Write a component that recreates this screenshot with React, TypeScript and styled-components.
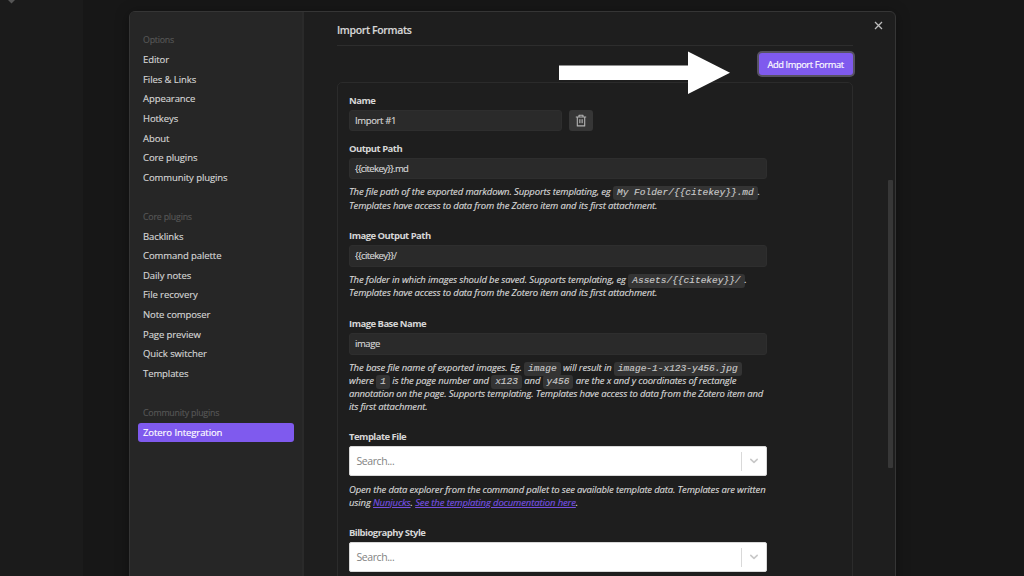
import React from 'react';
import styled, { createGlobalStyle } from 'styled-components';

const Global = createGlobalStyle`
  * { box-sizing: border-box; }
  html, body { margin: 0; height: 100%; overflow: hidden; background: #171717; }
  body { font-family: "Open Sans", "Noto Sans", sans-serif; font-size: 9.5px; color: #d6d6d6; -webkit-text-stroke: 0.15px; }
`;

const Screen = styled.div`
  position: relative;
  display: flex;
  width: 1024px;
  height: 576px;
  overflow: hidden;
  background: #171717;
`;

const Backdrop = styled.div`
  flex: 0 0 83px;
  background: #1b1b1b;
`;

const Diamond = styled.svg`
  display: block;
  margin-left: 8px;
`;

const Modal = styled.div`
  display: flex;
  flex: 0 0 767px;
  height: 600px;
  margin: 11px 0 0 45.5px;
  border: 1.5px solid #353535;
  border-radius: 6px;
  background: #1e1e1e;
  box-shadow: 0 2px 14px rgba(0, 0, 0, 0.35);
  overflow: hidden;
`;

const Sidebar = styled.nav`
  flex: 0 0 174px;
  padding: 18.2px 8px 0;
  background: #262626;
  border-right: 2px solid #2a2a2a;
`;

const NavGroup = styled.div`
  margin-bottom: 19px;
`;

const NavTitle = styled.div`
  height: 20px;
  padding-left: 5.5px;
  line-height: 20px;
  font-size: 8.8px;
  color: #565656;
  white-space: nowrap;
  letter-spacing: -0.2px;
`;

const NavItem = styled.div<{ $active?: boolean }>`
  height: 19.64px;
  padding-left: 5.5px;
  line-height: 19.64px;
  border-radius: 3px;
  white-space: nowrap;
  letter-spacing: -0.08px;
  color: ${(p) => (p.$active ? '#ffffff' : '#d4d4d4')};
  background: ${(p) => (p.$active ? '#7f5aee' : 'transparent')};
`;

const Main = styled.main`
  position: relative;
  flex: 1;
  padding: 8px 42px 0 33px;
`;

const Heading = styled.h1`
  height: 25.5px;
  margin: 0;
  border-bottom: 1px solid #2d2d2d;
  font-size: 10.5px;
  font-weight: 600;
  line-height: 20px;
  letter-spacing: -0.36px;
  text-indent: 0.5px;
`;

const Toolbar = styled.div`
  display: flex;
  justify-content: flex-end;
  padding: 7px 0 7px;
`;

const AddButton = styled.button`
  width: 94px;
  height: 22px;
  padding: 2px 0 0;
  border: 0;
  border-radius: 3px;
  background: #7f5aee;
  box-shadow: 0 0 0 2px #575262;
  color: #fff;
  font: 9.3px "Open Sans", sans-serif;
  white-space: nowrap;
  letter-spacing: -0.4px;
`;

const Card = styled.section`
  height: 530px;
  padding: 9px 11px 0;
  border: 1px solid #2b2b2b;
  border-radius: 5px;
`;

const Field = styled.div<{ $h: number }>`
  height: ${(p) => p.$h}px;
  width: 418px;
`;

const Label = styled.div`
  height: 18px;
  line-height: 18px;
  font-size: 9.5px;
  font-weight: 700;
  letter-spacing: -0.52px;
  text-indent: 0.5px;
  -webkit-text-stroke: 0;
`;

const InputRow = styled.div`
  display: flex;
  gap: 7px;
`;

const TextInput = styled.div<{ $w?: number; $ls?: number }>`
  width: ${(p) => p.$w ?? 418}px;
  height: 21.5px;
  padding-left: 5.5px;
  border: 1px solid #2e2e2e;
  border-radius: 3px;
  background: #2a2a2a;
  line-height: 20px;
  font-size: 9.5px;
  letter-spacing: ${(p) => p.$ls ?? -0.43}px;
  white-space: nowrap;
`;

const IconButton = styled.div`
  display: grid;
  place-items: center;
  width: 24.5px;
  height: 21px;
  border-radius: 3px;
  background: #363636;
`;

const Description = styled.div<{ $top?: number }>`
  padding: ${(p) => p.$top ?? 6}px 0 0 0.5px;
  font-style: italic;
`;

const Line = styled.div<{ $h?: number; $ls?: number }>`
  height: ${(p) => p.$h ?? 13}px;
  line-height: ${(p) => p.$h ?? 13}px;
  letter-spacing: ${(p) => p.$ls ?? -0.155}px;
  white-space: nowrap;
`;

const Code = styled.code`
  padding: 1px 4px 2px;
  border-radius: 3px;
  background: #343434;
  color: #c8c8c8;
  font: italic 9.5px "Liberation Mono", monospace;
  letter-spacing: 0;
  line-height: 10px;
`;

const Anchor = styled.a`
  color: #7650e0;
  text-decoration: underline;
`;

const SelectBox = styled.div`
  display: flex;
  align-items: center;
  height: 30px;
  padding-left: 7px;
  border: 1px solid #d8d8d8;
  border-radius: 2px;
  background: #fff;
  color: #828282;
  font-size: 10.5px;
  letter-spacing: -0.42px;
  -webkit-text-stroke: 0;
`;

const Placeholder = styled.span`
  flex: 1;
`;

const Indicator = styled.span`
  display: grid;
  place-items: center;
  width: 25px;
  height: 19px;
  border-left: 1px solid #d9d9d9;
`;

const CloseIcon = styled.svg`
  position: absolute;
  top: 9px;
  right: 12px;
`;

const Scrollbar = styled.div`
  position: absolute;
  top: 168px;
  right: 2px;
  width: 5px;
  height: 288px;
  border-radius: 1px;
  background: #373737;
`;

const Arrow = styled.svg`
  position: absolute;
  left: 559px;
  top: 51px;
`;

const Search = () => (
  <SelectBox>
    <Placeholder>Search...</Placeholder>
    <Indicator>
      <svg width="10" height="6" viewBox="0 0 10 6" fill="none" stroke="#c8c8c8" strokeWidth="1.6" strokeLinecap="round" strokeLinejoin="round">
        <path d="M1.8 1.4 5 4.4 8.2 1.4" />
      </svg>
    </Indicator>
  </SelectBox>
);

const groups: { title: string; items: string[] }[] = [
  {
    title: 'Options',
    items: ['Editor', 'Files & Links', 'Appearance', 'Hotkeys', 'About', 'Core plugins', 'Community plugins'],
  },
  {
    title: 'Core plugins',
    items: [
      'Backlinks', 'Command palette', 'Daily notes', 'File recovery',
      'Note composer', 'Page preview', 'Quick switcher', 'Templates',
    ],
  },
  { title: 'Community plugins', items: ['Zotero Integration'] },
];

export default function App() {
  return (
    <Screen>
      <Global />
      <Backdrop>
        <Diamond width="7" height="4" viewBox="0 0 7 4"><path d="M0 0h7L3.5 3.5z" fill="#555" /></Diamond>
      </Backdrop>
      <Modal>
        <Sidebar>
          {groups.map((g) => (
            <NavGroup key={g.title}>
              <NavTitle>{g.title}</NavTitle>
              {g.items.map((name) => (
                <NavItem key={name} $active={name === 'Zotero Integration'}>{name}</NavItem>
              ))}
            </NavGroup>
          ))}
        </Sidebar>
        <Main>
          <Heading>Import Formats</Heading>
          <Toolbar><AddButton>Add Import Format</AddButton></Toolbar>
          <Card>
            <Field $h={48}>
              <Label>Name</Label>
              <InputRow>
                <TextInput $w={213} $ls={-0.35}>Import #1</TextInput>
                <IconButton>
                  <svg width="12" height="13" viewBox="0 0 12 13" fill="none" stroke="#b4b4b4" strokeWidth="1.1" strokeLinejoin="round">
                    <path d="M.8 3h10.4M4 3V1.3h4V3M2.3 3v8.9h7.4V3" />
                    <path d="M4.6 5.2v4M6 5.2v4M7.4 5.2v4" strokeWidth=".8" />
                  </svg>
                </IconButton>
              </InputRow>
            </Field>
            <Field $h={87.5}>
              <Label>Output Path</Label>
              <TextInput $ls={-0.63}>{'{{citekey}}.md'}</TextInput>
              <Description>
                <Line $h={13.5} $ls={-0.14}>The file path of the exported markdown. Supports templating, eg <Code>{'My Folder/{{citekey}}.md'}</Code>.</Line>
                <Line>Templates have access to data from the Zotero item and its first attachment.</Line>
              </Description>
            </Field>
            <Field $h={88}>
              <Label>Image Output Path</Label>
              <TextInput $ls={-0.6}>{'{{citekey}}/'}</TextInput>
              <Description>
                <Line $h={13.5} $ls={-0.14}>The folder in which images should be saved. Supports templating, eg <Code>{'Assets/{{citekey}}/'}</Code>.</Line>
                <Line>Templates have access to data from the Zotero item and its first attachment.</Line>
              </Description>
            </Field>
            <Field $h={113}>
              <Label>Image Base Name</Label>
              <TextInput>image</TextInput>
              <Description>
                <Line $ls={-0.13}>The base file name of exported images. Eg. <Code>image</Code> will result in <Code>image-1-x123-y456.jpg</Code></Line>
                <Line $ls={-0.14}>where <Code>1</Code> is the page number and <Code>x123</Code> and <Code>y456</Code> are the x and y coordinates of rectangle</Line>
                <Line>annotation on the page. Supports templating. Templates have access to data from the Zotero item and</Line>
                <Line>its first attachment.</Line>
              </Description>
            </Field>
            <Field $h={96}>
              <Label>Template File</Label>
              <Search />
              <Description $top={7}>
                <Line>Open the data explorer from the command pallet to see available template data. Templates are written</Line>
                <Line $ls={-0.13}>using <Anchor>Nunjucks</Anchor>. <Anchor>See the templating documentation here</Anchor>.</Line>
              </Description>
            </Field>
            <Field $h={60}>
              <Label>Bilbiography Style</Label>
              <Search />
            </Field>
          </Card>
          <CloseIcon width="9" height="9" viewBox="0 0 9 9" stroke="#bdbdbd" strokeWidth="1.3">
            <path d="M1 1l7 7M8 1L1 8" />
          </CloseIcon>
          <Scrollbar />
        </Main>
      </Modal>
      <Arrow width="172" height="44" viewBox="0 0 172 44">
        <path d="M0 14.4H129V.6L171 21.8 129 43V29H0z" fill="#fff" />
      </Arrow>
    </Screen>
  );
}
